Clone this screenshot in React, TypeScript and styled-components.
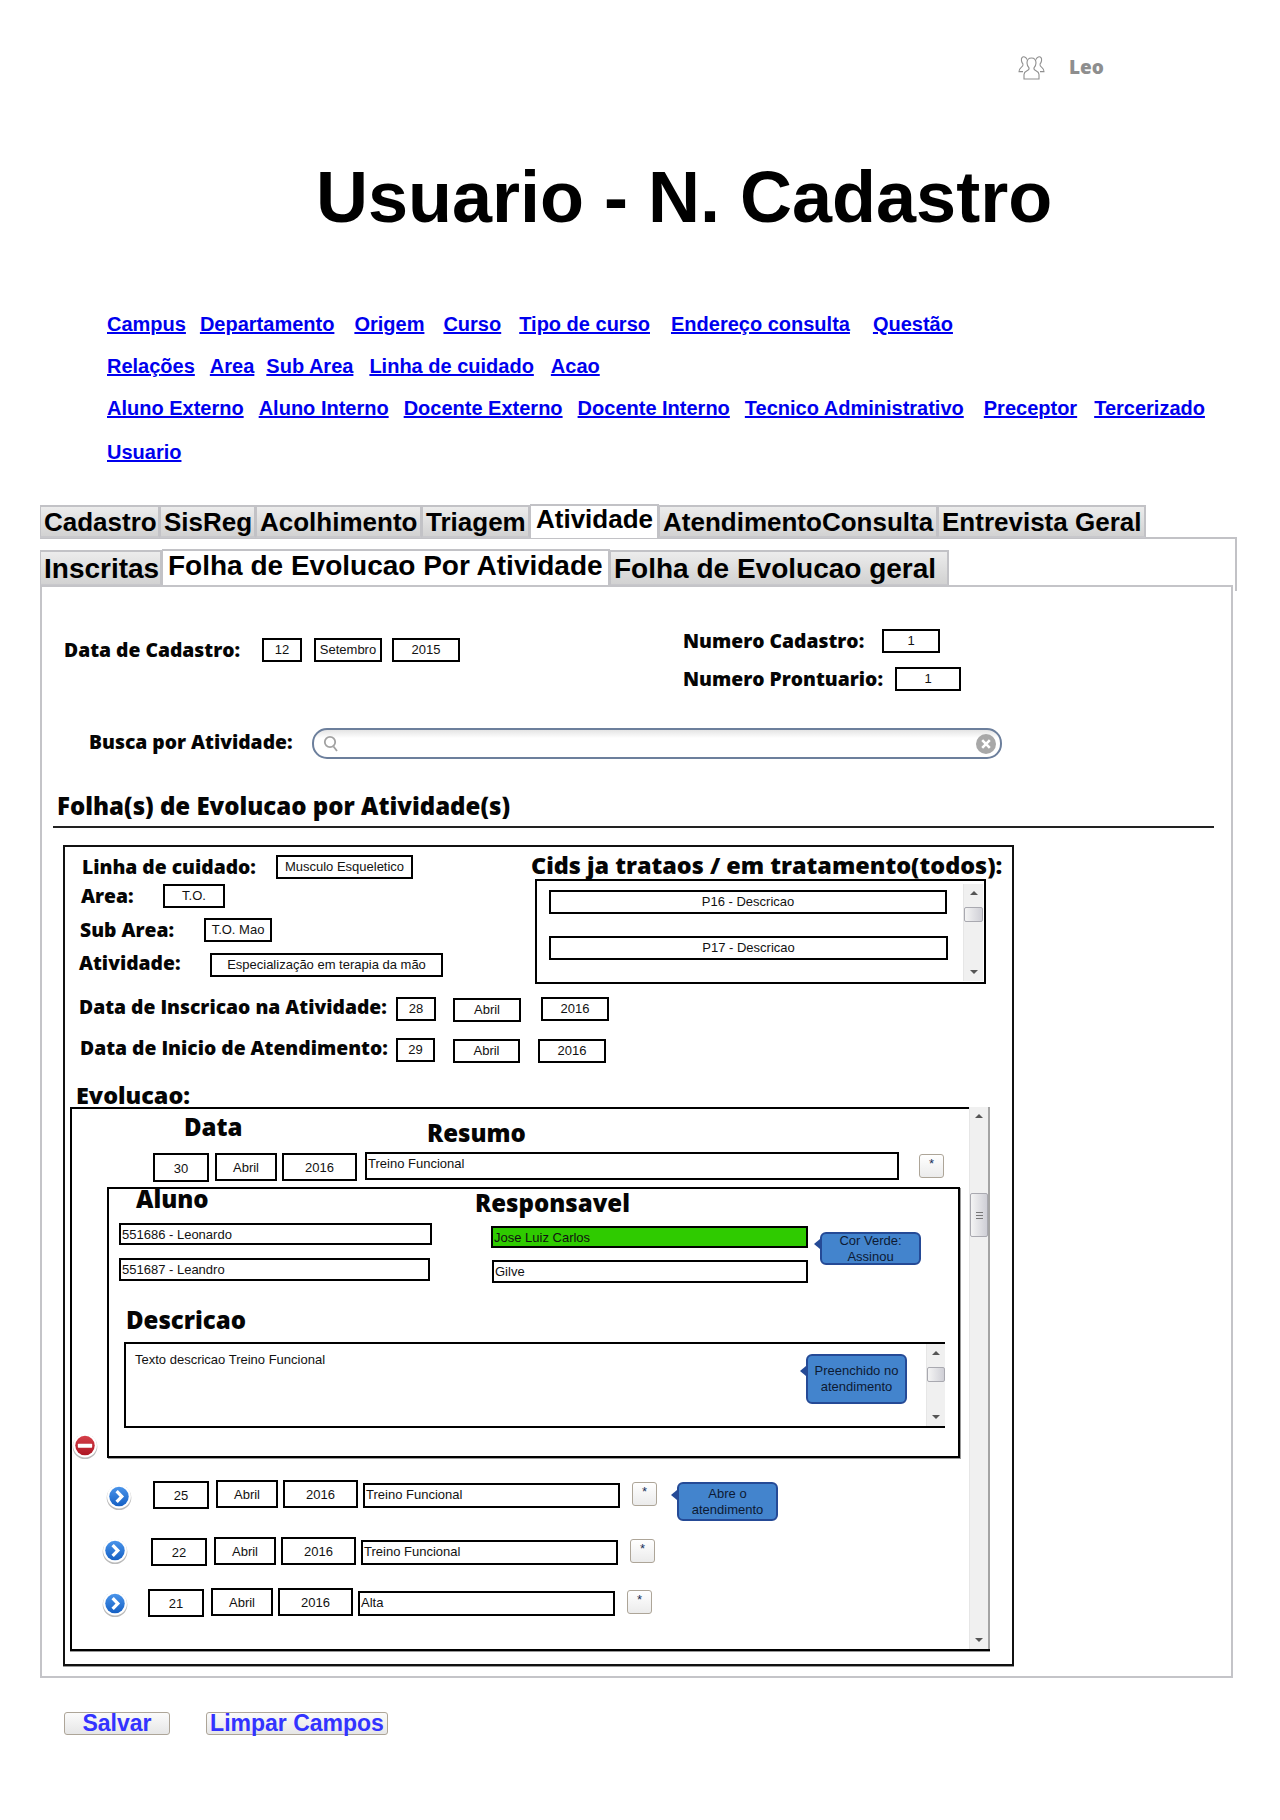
import React from "react";
import styled, { createGlobalStyle } from "styled-components";

const GlobalStyle = createGlobalStyle`
    html, body {
        margin: 0;
        padding: 0;
        background: #fff;
        font-family: "Liberation Sans", Arial, sans-serif;
        color: #000;
    }
    * {
        box-sizing: border-box;
    }
`;

const LABEL_FONT = `"Open Sans", "Liberation Sans", sans-serif`;

const Page = styled.div`
    width: 1280px;
    height: 1820px;
    overflow: hidden;
`;

const UserBar = styled.div`
    display: flex;
    align-items: center;
    padding: 55px 0 0 1018px;
    height: 79px;
`;

const UserName = styled.span`
    margin-left: 24px;
    font-family: ${LABEL_FONT};
    font-weight: 800;
    font-size: 19px;
    color: #8e8e8e;
`;

const Title = styled.h1`
    margin: 78px 0 0;
    padding-left: 316px;
    font-size: 72px;
    line-height: 80px;
    font-weight: 700;
    white-space: nowrap;
`;

const Nav = styled.nav`
    margin-top: 66px;
    padding-left: 107px;
`;

const NavRow = styled.div`
    display: flex;
    height: 42px;
    align-items: center;
    &:last-child {
        margin-top: 2px;
    }
`;

const NavLink = styled.a<{ $ml: number }>`
    margin-left: ${(p) => p.$ml}px;
    font-size: 20px;
    font-weight: 700;
    color: #0000ee;
    text-decoration: underline;
    white-space: nowrap;
`;

const TabStrip = styled.div<{ $h: number }>`
    display: flex;
    align-items: flex-end;
    height: ${(p) => p.$h}px;
`;

const Tab = styled.div<{ $w: number; $active?: boolean; $size: number; $lh: number }>`
    width: ${(p) => p.$w}px;
    height: ${(p) => (p.$active ? "100%" : "calc(100% - 1px)")};
    padding: ${(p) => (p.$active ? "0 0 0 5px" : "1px 0 0 3px")};
    border: 2px solid #c2c2c6;
    border-bottom: ${(p) => (p.$active ? "none" : "2px solid #c8c8cc")};
    border-left-width: 1px;
    background: ${(p) => (p.$active ? "#fff" : "linear-gradient(#ececec, #d2d2d2)")};
    font-size: ${(p) => p.$size}px;
    line-height: ${(p) => p.$lh + (p.$active ? 0 : 2)}px;
    font-weight: 700;
    white-space: nowrap;
`;

const TopTabs = styled.div`
    margin: 31px 0 0 40px;
`;

const SubFrame = styled.div`
    height: 54px;
    width: 1197px;
    margin: -1px 0 -6px 40px;
    padding-top: 10px;
    border-top: 2px solid #c2c2c6;
    border-right: 2px solid #c2c2c6;
`;

const Panel = styled.div`
    position: relative;
    width: 1193px;
    height: 1093px;
    margin-left: 40px;
    border: 2px solid #c4c4c8;
`;

const Row = styled.div<{ $mt?: number; $pl?: number }>`
    display: flex;
    align-items: flex-start;
    margin-top: ${(p) => p.$mt ?? 0}px;
    padding-left: ${(p) => p.$pl ?? 0}px;
`;

const Column = styled.div<{ $w?: number; $pt?: number; $pl?: number }>`
    display: flex;
    flex-direction: column;
    align-items: flex-start;
    ${(p) => (p.$w ? `width: ${p.$w}px; flex: none;` : "")}
    padding-top: ${(p) => p.$pt ?? 0}px;
    padding-left: ${(p) => p.$pl ?? 0}px;
`;

const Label = styled.span<{ $w?: number; $mt?: number }>`
    ${(p) => (p.$w ? `width: ${p.$w}px; flex: none;` : "")}
    margin-top: ${(p) => p.$mt ?? 0}px;
    font-family: ${LABEL_FONT};
    font-weight: 800;
    font-size: 19.3px;
    line-height: 24px;
    color: #050505;
    white-space: nowrap;
`;

const Heading = styled.div<{ $lh: number; $size?: number; $w?: number; $ml?: number; $mt?: number }>`
    ${(p) => (p.$w ? `width: ${p.$w}px; flex: none;` : "")}
    margin-left: ${(p) => p.$ml ?? 0}px;
    margin-top: ${(p) => p.$mt ?? 0}px;
    font-family: ${LABEL_FONT};
    font-weight: 800;
    font-size: ${(p) => p.$size ?? 24}px;
    line-height: ${(p) => p.$lh}px;
    color: #050505;
    white-space: nowrap;
`;

const Box = styled.div<{ $w: number; $h?: number; $ml?: number; $mt?: number; $left?: boolean; $bg?: string }>`
    flex: none;
    width: ${(p) => p.$w}px;
    height: ${(p) => p.$h ?? 24}px;
    margin-left: ${(p) => p.$ml ?? 0}px;
    margin-top: ${(p) => p.$mt ?? 0}px;
    border: 2px solid #000;
    background: ${(p) => p.$bg ?? "#fff"};
    font-size: 13px;
    color: #111;
    ${(p) =>
        p.$left
            ? `padding: 2px 0 0 1px; line-height: 15px; text-align: left;`
            : `text-align: center; line-height: ${(p.$h ?? 24) - ((p.$h ?? 24) >= 28 ? 2 : 4)}px;`}
`;

const StarButton = styled.div<{ $ml: number; $mt: number }>`
    flex: none;
    width: 25px;
    height: 24px;
    margin-left: ${(p) => p.$ml}px;
    margin-top: ${(p) => p.$mt}px;
    border: 1px solid #ada598;
    border-radius: 3px;
    background: linear-gradient(#fff, #ebebeb);
    font-size: 13px;
    line-height: 17px;
    text-align: center;
    color: #15305a;
`;

const Search = styled.div`
    display: flex;
    align-items: center;
    justify-content: space-between;
    flex: none;
    width: 690px;
    height: 31px;
    padding: 0 3px 0 9px;
    border: 2px solid #6c7f9c;
    border-radius: 15px;
    background: linear-gradient(#e4e4e4, #fff 30%);
`;

const Rule = styled.div`
    width: 1161px;
    height: 2px;
    margin: 5px 0 0 11px;
    background: #222;
`;

const OuterBox = styled.div`
    width: 951px;
    height: 821px;
    margin: 17px 0 0 21px;
    border: 2px solid #111;
    box-shadow: 0 1px 0 #999;
`;

const CidsBox = styled.div`
    display: flex;
    justify-content: space-between;
    width: 451px;
    height: 105px;
    margin-left: 4px;
    padding: 3px 1px 1px 12px;
    border: 2px solid #000;
`;

const Scrollbar = styled.div<{ $w: number; $flush?: boolean }>`
    display: flex;
    flex-direction: column;
    align-items: center;
    flex: none;
    width: ${(p) => p.$w}px;
    padding: 7px 0;
    background: #f0f0f0;
    border-left: 1px solid #e6e6e6;
    ${(p) => (p.$flush ? "border-right: 2px solid #a4a4a4;" : "")}
`;

const ScrollArrow = styled.div<{ $down?: boolean }>`
    flex: none;
    width: 0;
    height: 0;
    border-left: 4px solid transparent;
    border-right: 4px solid transparent;
    ${(p) => (p.$down ? "border-top: 4px solid #555;" : "border-bottom: 4px solid #555;")}
`;

const ScrollThumb = styled.div<{ $mt: number; $h: number }>`
    display: flex;
    align-items: center;
    justify-content: center;
    flex: none;
    width: 100%;
    height: ${(p) => p.$h}px;
    margin-top: ${(p) => p.$mt}px;
    border: 1px solid #a9a9b0;
    border-radius: 2px;
    background: linear-gradient(90deg, #f4f4f4, #cfcfd6);
`;

const Grip = styled.div`
    width: 7px;
    height: 7px;
    background: repeating-linear-gradient(#777 0 1px, transparent 1px 3px);
`;

const ScrollGap = styled.div`
    flex: 1;
`;

const EvolucaoBox = styled.div`
    display: flex;
    width: 920px;
    height: 544px;
    margin-left: 5px;
    border-left: 2px solid #000;
    border-bottom: 2px solid #000;
    box-shadow: 0 1px 0 #999;
`;

const EvolucaoContent = styled.div`
    flex: none;
    width: 897px;
    border-top: 2px solid #000;
`;

const DetailBox = styled.div`
    flex: none;
    width: 853px;
    height: 271px;
    border: 2px solid #000;
    box-shadow: 1px 1px 0 #999;
`;

const TextArea = styled.div`
    display: flex;
    width: 821px;
    height: 86px;
    margin: 7px 0 0 15px;
    border-top: 2px solid #000;
    border-left: 2px solid #000;
    border-bottom: 2px solid #000;
`;

const TextAreaText = styled.div`
    flex: 1;
    padding: 8px 0 0 9px;
    font-size: 13px;
    line-height: 16px;
    color: #111;
`;

const Callout = styled.div<{ $w?: number; $h: number; $ml?: number; $mr?: number; $mt?: number; $tail: number }>`
    position: relative;
    flex: none;
    width: ${(p) => p.$w ?? 101}px;
    height: ${(p) => p.$h}px;
    margin-left: ${(p) => p.$ml ?? 0}px;
    margin-right: ${(p) => p.$mr ?? 0}px;
    margin-top: ${(p) => p.$mt ?? 0}px;
    display: flex;
    align-items: center;
    justify-content: center;
    border: 2px solid #254a96;
    border-radius: 6px;
    background: #4384cd;
    font-size: 13px;
    line-height: 16px;
    text-align: center;
    color: #0d1a33;
    &::before {
        content: "";
        position: absolute;
        left: -8px;
        top: ${(p) => p.$tail}px;
        border-top: 5px solid transparent;
        border-bottom: 5px solid transparent;
        border-right: 6px solid #254a96;
    }
`;

const IconSlot = styled.div<{ $ml: number; $mt: number }>`
    flex: none;
    width: 26px;
    height: 26px;
    margin-left: ${(p) => p.$ml}px;
    margin-top: ${(p) => p.$mt}px;
`;

const Gutter = styled.div`
    display: flex;
    align-items: flex-end;
    align-self: stretch;
    flex: none;
    width: 35px;
    margin-bottom: -1px;
`;

const Actions = styled.div`
    display: flex;
    gap: 36px;
    margin: 34px 0 0 64px;
`;

const ActionButton = styled.div<{ $w: number }>`
    width: ${(p) => p.$w}px;
    height: 23px;
    border: 1px solid #ada598;
    border-radius: 3px;
    background: linear-gradient(#fbfbfb, #e6e6e6);
    font-size: 23px;
    line-height: 21px;
    font-weight: 700;
    text-align: center;
    color: #3333ff;
    white-space: nowrap;
`;

const UsersIcon = () => (
    <svg width="27" height="25" viewBox="0 0 27 25" fill="none" stroke="#8f8f8f" strokeWidth="1.1">
        <path d="M9 4.5C8 2.2 5.5 .8 4 2.6 2.7 4.2 3.6 7.4 5 9 5.4 10.4 4.5 11.4 3 12.6 1.6 13.7 .8 15 1 16.6H5" />
        <path d="M18 4.5C19 2.2 21.5 .8 23 2.6 24.3 4.2 23.4 7.4 22 9 21.6 10.4 22.5 11.4 24 12.6 25.4 13.7 26.2 15 26 16.6H22" />
        <path d="M13.5 3C10.3 3 9 5.4 9 8c0 2 .9 3.6 2 4.8.4 1.4-.4 2.2-2 3-1.8.9-3 1.8-3 3.6V24h15v-4.6c0-1.8-1.2-2.7-3-3.6-1.6-.8-2.4-1.6-2-3 1.1-1.2 2-2.8 2-4.8 0-2.6-1.3-5-4.5-5Z" />
    </svg>
);

const MagnifierIcon = () => (
    <svg width="16" height="17" viewBox="0 0 16 17" fill="none" stroke="#a2a2a2" strokeWidth="1.8">
        <circle cx="7" cy="7" r="5.2" />
        <path d="M10.5 11.5 14 16" />
    </svg>
);

const ClearIcon = () => (
    <svg width="22" height="22" viewBox="0 0 22 22">
        <circle cx="11" cy="11" r="10" fill="#a8a8a8" />
        <path d="M7.2 7.2 14.8 14.8M14.8 7.2 7.2 14.8" stroke="#fff" strokeWidth="2.6" />
    </svg>
);

const RoundIcon: React.FC<{ id: string; from: string; to: string; children: React.ReactNode }> = ({
    id,
    from,
    to,
    children,
}) => (
    <svg width="26" height="26" viewBox="0 0 24 24">
        <defs>
            <linearGradient id={id} x1="0" y1="0" x2="0" y2="1">
                <stop offset="0" stopColor={from} />
                <stop offset="1" stopColor={to} />
            </linearGradient>
        </defs>
        <circle cx="12" cy="12.6" r="11.4" fill="#bbb" />
        <circle cx="12" cy="11.6" r="11" fill="#fff" />
        <circle cx="12" cy="11.6" r="9" fill={`url(#${id})`} />
        {children}
    </svg>
);

const ArrowIcon: React.FC<{ id: string }> = ({ id }) => (
    <RoundIcon id={id} from="#4a94ea" to="#1560c4">
        <path d="M9.8 6.6 14.6 11.6 9.8 16.6" fill="none" stroke="#fff" strokeWidth="3" />
    </RoundIcon>
);

const MinusIcon = () => (
    <RoundIcon id="minus" from="#d5404a" to="#ad1522">
        <rect x="5.4" y="9.9" width="13.2" height="3.6" fill="#fff" rx="0.6" />
    </RoundIcon>
);

const navRows = [
    [
        ["Campus", 0],
        ["Departamento", 14],
        ["Origem", 20],
        ["Curso", 19],
        ["Tipo de curso", 18],
        ["Endereço consulta", 21],
        ["Questão", 23],
    ],
    [
        ["Relações", 0],
        ["Area", 15],
        ["Sub Area", 12],
        ["Linha de cuidado", 16],
        ["Acao", 17],
    ],
    [
        ["Aluno Externo", 0],
        ["Aluno Interno", 15],
        ["Docente Externo", 15],
        ["Docente Interno", 15],
        ["Tecnico Administrativo", 15],
        ["Preceptor", 20],
        ["Tercerizado", 17],
    ],
    [["Usuario", 0]],
] as [string, number][][];

const topTabs = [
    ["Cadastro", 120],
    ["SisReg", 96],
    ["Acolhimento", 166],
    ["Triagem", 108],
    ["Atividade", 129],
    ["AtendimentoConsulta", 279],
    ["Entrevista Geral", 208],
] as [string, number][];

const subTabs = [
    ["Inscritas", 122],
    ["Folha de Evolucao Por Atividade", 448],
    ["Folha de Evolucao geral", 339],
] as [string, number][];

const evolucoes = [
    { dia: "25", resumo: "Treino Funcional", mt: 22, pl: 34, iconTop: 4, gap: 21, note: true },
    { dia: "22", resumo: "Treino Funcional", mt: 16, pl: 30, iconTop: 1, gap: 23, note: false },
    { dia: "21", resumo: "Alta", mt: 22, pl: 30, iconTop: 3, gap: 20, note: false },
];

export default function App() {
    return (
        <Page>
            <GlobalStyle />
            <UserBar>
                <UsersIcon />
                <UserName>Leo</UserName>
            </UserBar>
            <Title>Usuario - N. Cadastro</Title>
            <Nav>
                {navRows.map((links, r) => (
                    <NavRow key={r}>
                        {links.map(([text, ml]) => (
                            <NavLink key={text} $ml={ml} href="#">
                                {text}
                            </NavLink>
                        ))}
                    </NavRow>
                ))}
            </Nav>
            <TopTabs>
                <TabStrip $h={34}>
                    {topTabs.map(([text, w]) => (
                        <Tab key={text} $w={w} $size={26} $lh={26} $active={text === "Atividade"}>
                            {text}
                        </Tab>
                    ))}
                </TabStrip>
            </TopTabs>
            <SubFrame>
                <TabStrip $h={37}>
                    {subTabs.map(([text, w]) => (
                        <Tab key={text} $w={w} $size={28} $lh={30} $active={text.includes("Por")}>
                            {text}
                        </Tab>
                    ))}
                </TabStrip>
            </SubFrame>
            <Panel>
                <Row>
                    <Column $w={641} $pt={51} $pl={22}>
                        <Row>
                            <Label $w={198}>Data de Cadastro:</Label>
                            <Box $w={40}>12</Box>
                            <Box $w={68} $ml={12}>Setembro</Box>
                            <Box $w={68} $ml={10}>2015</Box>
                        </Row>
                    </Column>
                    <Column $pt={42}>
                        <Row>
                            <Label $w={199}>Numero Cadastro:</Label>
                            <Box $w={58}>1</Box>
                        </Row>
                        <Row $mt={14}>
                            <Label $w={212}>Numero Prontuario:</Label>
                            <Box $w={66}>1</Box>
                        </Row>
                    </Column>
                </Row>
                <Row $mt={37} $pl={47}>
                    <Label $w={223} $mt={2}>Busca por Atividade:</Label>
                    <Search>
                        <MagnifierIcon />
                        <ClearIcon />
                    </Search>
                </Row>
                <Heading $lh={30} $ml={15} $mt={32}>Folha(s) de Evolucao por Atividade(s)</Heading>
                <Rule />
                <OuterBox>
                    <Row>
                        <Column $w={466}>
                            <Row $mt={8} $pl={17}>
                                <Label $w={194}>Linha de cuidado:</Label>
                                <Box $w={137}>Musculo Esqueletico</Box>
                            </Row>
                            <Row $mt={5} $pl={16}>
                                <Label $w={82}>Area:</Label>
                                <Box $w={62}>T.O.</Box>
                            </Row>
                            <Row $mt={10} $pl={15}>
                                <Label $w={124}>Sub Area:</Label>
                                <Box $w={68}>T.O. Mao</Box>
                            </Row>
                            <Row $mt={11} $pl={14}>
                                <Label $w={131} $mt={-2}>Atividade:</Label>
                                <Box $w={233}>Especialização em terapia da mão</Box>
                            </Row>
                        </Column>
                        <Column $pt={4}>
                            <Heading $lh={28} $size={23.4}>Cids ja trataos / em tratamento(todos):</Heading>
                            <CidsBox>
                                <Column $w={400}>
                                    <Box $w={398} $mt={6}>P16 - Descricao</Box>
                                    <Box $w={399} $mt={22}>P17 - Descricao</Box>
                                </Column>
                                <Scrollbar $w={20}>
                                    <ScrollArrow />
                                    <ScrollThumb $mt={12} $h={15} />
                                    <ScrollGap />
                                    <ScrollArrow $down />
                                </Scrollbar>
                            </CidsBox>
                        </Column>
                    </Row>
                    <Row $mt={13} $pl={14}>
                        <Label $w={317} $mt={-2}>Data de Inscricao na Atividade:</Label>
                        <Box $w={40}>28</Box>
                        <Box $w={68} $ml={17} $mt={1}>Abril</Box>
                        <Box $w={68} $ml={20}>2016</Box>
                    </Row>
                    <Row $mt={16} $pl={15}>
                        <Label $w={316} $mt={-2}>Data de Inicio de Atendimento:</Label>
                        <Box $w={39}>29</Box>
                        <Box $w={67} $ml={18} $mt={1}>Abril</Box>
                        <Box $w={68} $ml={18} $mt={1}>2016</Box>
                    </Row>
                    <Heading $lh={24} $size={23.4} $ml={11} $mt={20}>Evolucao:</Heading>
                    <EvolucaoBox>
                        <EvolucaoContent>
                            <Row $pl={112}>
                                <Heading $lh={30} $w={243} $mt={3}>Data</Heading>
                                <Heading $lh={30} $mt={9}>Resumo</Heading>
                            </Row>
                            <Row $pl={81} $mt={4}>
                                <Box $w={56} $h={29} $mt={1}>30</Box>
                                <Box $w={62} $h={28} $ml={6} $mt={1}>Abril</Box>
                                <Box $w={75} $h={28} $ml={5} $mt={1}>2016</Box>
                                <Box $w={534} $h={28} $ml={8} $left>Treino Funcional</Box>
                                <StarButton $ml={20} $mt={2}>*</StarButton>
                            </Row>
                            <Row $mt={5}>
                                <Gutter>
                                    <MinusIcon />
                                </Gutter>
                                <DetailBox>
                                    <Row>
                                        <Column $w={366}>
                                            <Heading $lh={20} $ml={27}>Aluno</Heading>
                                            <Box $w={313} $h={22} $ml={10} $mt={14} $left>551686 - Leonardo</Box>
                                            <Box $w={311} $h={23} $ml={10} $mt={13} $left>551687 - Leandro</Box>
                                        </Column>
                                        <Column>
                                            <Heading $lh={28}>Responsavel</Heading>
                                            <Row $pl={16}>
                                                <Column>
                                                    <Box $w={317} $h={22} $mt={9} $left $bg="#2fcb00">Jose Luiz Carlos</Box>
                                                    <Box $w={316} $h={23} $ml={1} $mt={12} $left>Gilve</Box>
                                                </Column>
                                                <Callout $h={33} $ml={12} $mt={15} $tail={5}>
                                                    Cor Verde:
                                                    <br />
                                                    Assinou
                                                </Callout>
                                            </Row>
                                        </Column>
                                    </Row>
                                    <Heading $lh={30} $ml={17} $mt={22}>Descricao</Heading>
                                    <TextArea>
                                        <TextAreaText>Texto descricao Treino Funcional</TextAreaText>
                                        <Callout $h={50} $mr={19} $mt={10} $tail={10}>
                                            Preenchido no
                                            <br />
                                            atendimento
                                        </Callout>
                                        <Scrollbar $w={19}>
                                            <ScrollArrow />
                                            <ScrollThumb $mt={12} $h={15} />
                                            <ScrollGap />
                                            <ScrollArrow $down />
                                        </Scrollbar>
                                    </TextArea>
                                </DetailBox>
                            </Row>
                            {evolucoes.map((e) => (
                                <Row key={e.dia} $mt={e.mt}>
                                    <IconSlot $ml={e.pl} $mt={e.iconTop}>
                                        <ArrowIcon id={`arrow-${e.dia}`} />
                                    </IconSlot>
                                    <Box $w={56} $h={28} $ml={e.gap} $mt={1}>{e.dia}</Box>
                                    <Box $w={62} $h={28} $ml={7}>Abril</Box>
                                    <Box $w={75} $h={28} $ml={5}>2016</Box>
                                    <Box $w={257} $h={25} $ml={5} $mt={3} $left>{e.resumo}</Box>
                                    <StarButton $ml={12} $mt={2}>*</StarButton>
                                    {e.note && (
                                        <Callout $h={39} $ml={20} $mt={2} $tail={6}>
                                            Abre o
                                            <br />
                                            atendimento
                                        </Callout>
                                    )}
                                </Row>
                            ))}
                        </EvolucaoContent>
                        <Scrollbar $w={21} $flush>
                            <ScrollArrow />
                            <ScrollThumb $mt={75} $h={44}>
                                <Grip />
                            </ScrollThumb>
                            <ScrollGap />
                            <ScrollArrow $down />
                        </Scrollbar>
                    </EvolucaoBox>
                </OuterBox>
            </Panel>
            <Actions>
                <ActionButton $w={106}>Salvar</ActionButton>
                <ActionButton $w={182}>Limpar Campos</ActionButton>
            </Actions>
        </Page>
    );
}
